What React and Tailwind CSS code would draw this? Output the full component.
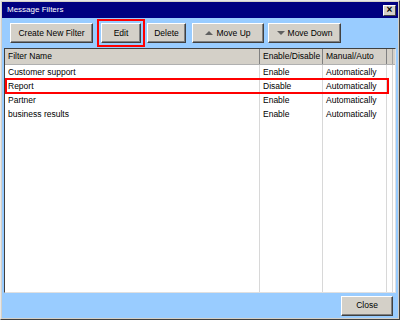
import React from "react";

const font = { fontFamily: '"Liberation Sans", Arial, sans-serif' };

function Btn({ children, className = "" }) {
  return (
    <div
      className={
        "h-[20px] flex items-center justify-center bg-[#d4d0c8] border border-t-white border-l-white border-r-[#404040] border-b-[#404040] shadow-[inset_-1px_-1px_0_#808080] text-[8.5px] text-black shrink-0 " +
        className
      }
    >
      {children}
    </div>
  );
}

const rows = [
  ["Customer support", "Enable", "Automatically"],
  ["Report", "Disable", "Automatically"],
  ["Partner", "Enable", "Automatically"],
  ["business results", "Enable", "Automatically"],
];

export default function App() {
  return (
    <div
      className="w-[400px] h-[320px] bg-[#d4d0c8] border border-t-[#e8e8e8] border-l-[#e8e8e8] border-r-[#404040] border-b-[#404040] p-[1px] flex flex-col"
      style={font}
    >
      <div className="h-[16px] bg-[#000080] flex items-center justify-between pl-[5px] pr-[2px]">
        <span className="text-[8px] text-white">Message Filters</span>
        <div className="w-[13px] h-[11px] bg-[#d4d0c8] border border-t-white border-l-white border-r-[#404040] border-b-[#404040] flex items-center justify-center text-[10px] leading-none font-bold text-black">
          ×
        </div>
      </div>
      <div className="flex-1 bg-[#99ccff] flex flex-col">
        <div className="h-[30px] flex items-center pl-[8px]">
          <Btn className="w-[83px]">Create New Filter</Btn>
          <div className="border-2 border-[#ff0000] p-[2px] ml-[4px] shrink-0">
            <Btn className="w-[40px]">Edit</Btn>
          </div>
          <Btn className="w-[39px] ml-[2px]">Delete</Btn>
          <Btn className="w-[72px] ml-[6px] gap-[3px]">
            <span className="w-0 h-0 border-l-[4px] border-r-[4px] border-b-[4px] border-l-transparent border-r-transparent border-b-[#606060]" />
            Move Up
          </Btn>
          <Btn className="w-[73px] ml-[4px] gap-[3px]">
            <span className="w-0 h-0 border-l-[4px] border-r-[4px] border-t-[4px] border-l-transparent border-r-transparent border-t-[#606060]" />
            Move Down
          </Btn>
        </div>
        <div className="relative mx-[2px] flex-1 bg-white border border-t-[#404040] border-l-[#404040] border-r-[#e0e0e0] border-b-[#e0e0e0] flex flex-col text-[8.5px] text-black">
          <div className="flex h-[16px] bg-[#d4d0c8] border-b border-[#b0b0b0]">
            <div className="w-[255px] pl-[3px] flex items-center border-r border-[#808080]">Filter Name</div>
            <div className="w-[63px] pl-[3px] flex items-center border-r border-[#808080]">Enable/Disable</div>
            <div className="w-[64px] pl-[3px] flex items-center border-r border-[#808080]">Manual/Auto</div>
            <div className="w-[6px] border-r border-[#a0a0a0]" />
            <div className="flex-1" />
          </div>
          <div className="flex-1 flex">
            <div className="w-[255px] border-r border-[#d8d8d8] flex flex-col">
              {rows.map((r, i) => (
                <div key={i} className="h-[14px] pl-[3px] flex items-center">{r[0]}</div>
              ))}
            </div>
            <div className="w-[63px] border-r border-[#d8d8d8] flex flex-col">
              {rows.map((r, i) => (
                <div key={i} className="h-[14px] pl-[3px] flex items-center">{r[1]}</div>
              ))}
            </div>
            <div className="w-[64px] border-r border-[#d8d8d8] flex flex-col">
              {rows.map((r, i) => (
                <div key={i} className="h-[14px] pl-[3px] flex items-center">{r[2]}</div>
              ))}
            </div>
            <div className="w-[6px] border-r border-[#d8d8d8]" />
            <div className="flex-1" />
          </div>
          <div className="absolute left-[0px] top-[29px] w-[384px] h-[16px] border-2 border-[#ff0000]" />
        </div>
        <div className="h-[25px] flex items-center justify-end pr-[5px]">
          <Btn className="w-[52px]">Close</Btn>
        </div>
      </div>
    </div>
  );
}
